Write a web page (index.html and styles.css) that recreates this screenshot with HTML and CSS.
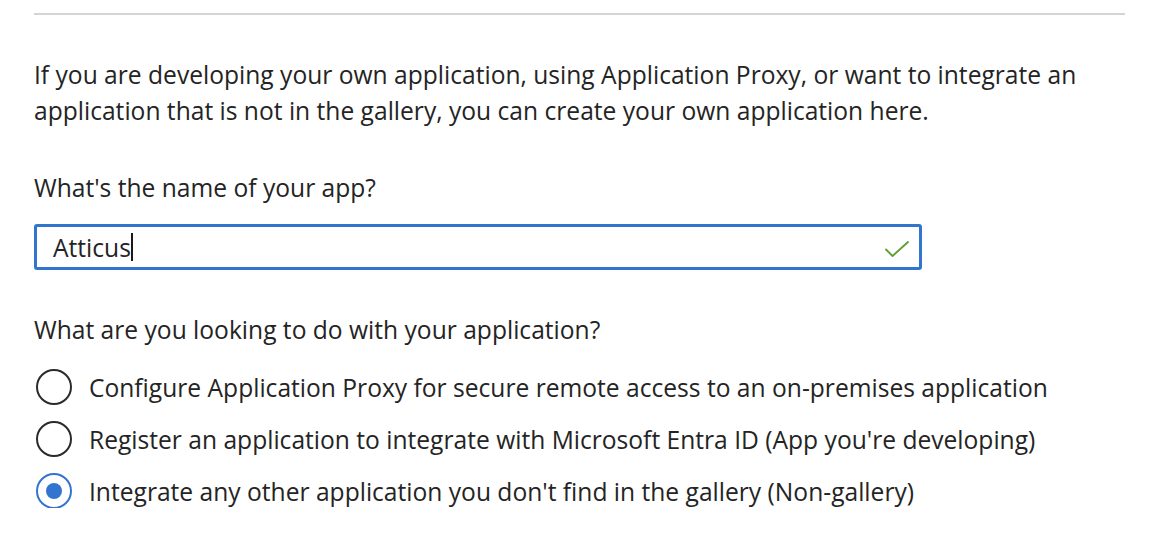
FILE: index.html
```html
<!DOCTYPE html>
<html lang="en">
<head>
    <meta charset="UTF-8">
    <meta name="viewport" content="width=device-width, initial-scale=1.0">
    <title>Create your own application</title>
    <link rel="stylesheet" href="styles.css">
</head>
<body>

    <div class="panel">
        <hr class="divider">

        <p class="intro">If you are developing your own application, using Application Proxy, or want to integrate an application that is not in the gallery, you can create your own application here.</p>

        <label class="field-label" for="app-name">What's the name of your app?</label>
        <div class="text-field">
            <span class="text-value">Atticus</span><span class="caret"></span>
            <svg class="valid-icon" viewBox="0 0 24 16" width="24" height="16">
                <path d="M1 8.5 L7.5 15 L23 1" fill="none" stroke="#5c9e2f" stroke-width="1.8" stroke-linecap="round" stroke-linejoin="round"></path>
            </svg>
        </div>

        <div class="field-label question">What are you looking to do with your application?</div>
        <div class="radio-group">
            <div class="radio-option">
                <span class="radio"></span>
                <span>Configure Application Proxy for secure remote access to an on-premises application</span>
            </div>
            <div class="radio-option">
                <span class="radio"></span>
                <span>Register an application to integrate with Microsoft Entra ID (App you're developing)</span>
            </div>
            <div class="radio-option">
                <span class="radio checked"></span>
                <span>Integrate any other application you don't find in the gallery (Non-gallery)</span>
            </div>
        </div>
    </div>

</body>
</html>
```

FILE: styles.css
```css
body {
    margin: 0;
    background-color: #ffffff;
    color: #242424;
    font-family: "Open Sans", "Noto Sans", sans-serif;
    font-size: 24.6px;
}

.panel {
    width: 1091px;
    padding: 13px 0 0 34px;
}

.divider {
    margin: 0;
    border: none;
    height: 2px;
    background-color: #d4d4d4;
}

.intro {
    margin: 42px 0 0 0;
    line-height: 36px;
    width: 1070px;
}

.field-label {
    display: block;
    margin-top: 44px;
    line-height: 30px;
}

/* name input, focused state */
.text-field {
    margin-top: 21px;
    height: 40px;
    border: 3px solid #3275d0;
    border-radius: 3px;
    display: flex;
    align-items: center;
    padding-left: 16px;
    width: 866px;
}

.caret {
    width: 2px;
    height: 28px;
    background-color: #1a1a1a;
}

.valid-icon {
    margin-left: auto;
    margin-right: 10px;
    margin-top: 4px;
}

.question {
    margin-top: 45px;
}

.radio-group {
    margin-top: 25px;
    display: flex;
    flex-direction: column;
    gap: 18px;
}

.radio-option {
    display: flex;
    align-items: center;
    gap: 17px;
    height: 34px;
    margin-left: 2px;
}

.radio {
    width: 32px;
    height: 32px;
    border: 2px solid #2b2b2b;
    border-radius: 50%;
    display: flex;
    align-items: center;
    justify-content: center;
    flex-shrink: 0;
}

.radio.checked {
    border-color: #3275d0;
}

.radio.checked::after {
    content: "";
    width: 16px;
    height: 16px;
    border-radius: 50%;
    background-color: #3275d0;
}
```
